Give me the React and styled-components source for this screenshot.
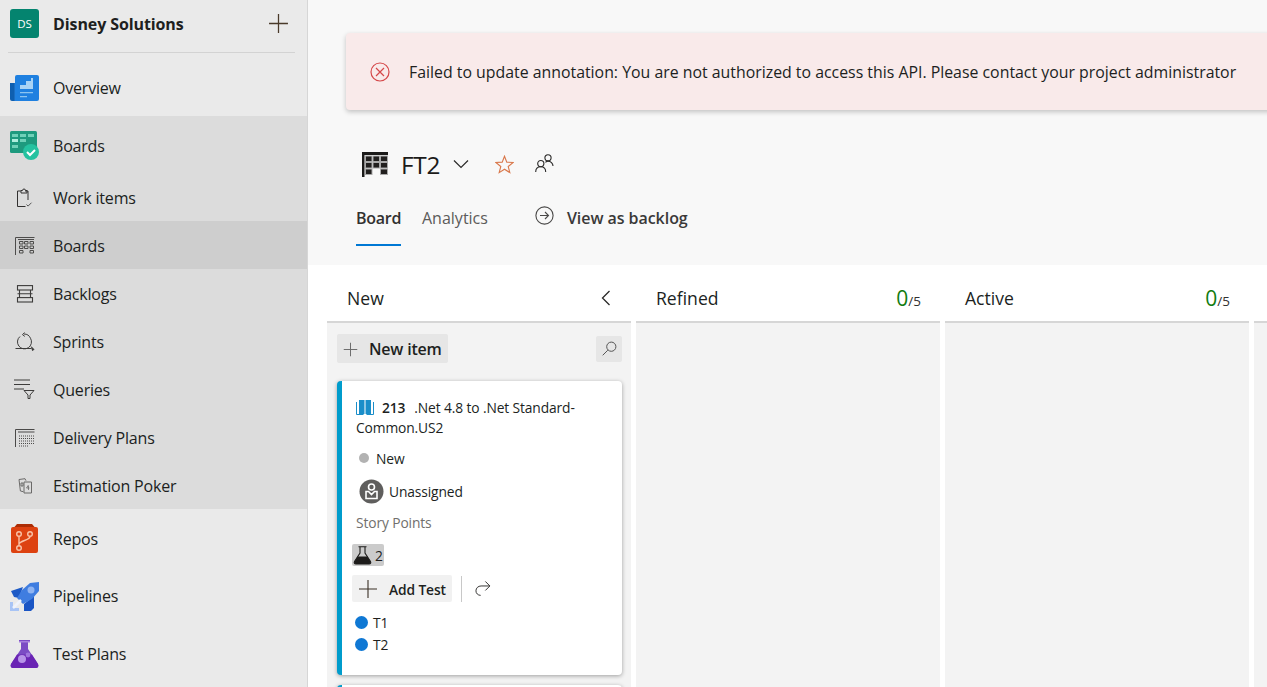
import React from 'react';
import styled, { createGlobalStyle } from 'styled-components';

const Global = createGlobalStyle`
  html, body { margin: 0; padding: 0; height: 100%; overflow: hidden; }
  body { font-family: "Open Sans", "Noto Sans", sans-serif; color: #201f1e; background: #fff; }
  * { box-sizing: border-box; }
`;

const Page = styled.div`
  display: flex;
  width: 1267px;
  height: 687px;
  overflow: hidden;
`;

/* ---- sidebar ---- */
const Sidebar = styled.nav`
  flex: 0 0 308px;
  background: #eaeaea;
  border-right: 1px solid #d6d6d6;
  display: flex;
  flex-direction: column;
`;
const ProjectHead = styled.div`
  height: 53px;
  margin: 0 12px 0 8px;
  padding: 0 2px 5px;
  display: flex;
  align-items: center;
  gap: 14px;
  border-bottom: 1px solid #d3d3d3;
`;
const Avatar = styled.div`
  width: 29px;
  height: 29px;
  border-radius: 3px;
  background: #04846f;
  color: #fff;
  font-size: 11.5px;
  display: flex;
  align-items: center;
  justify-content: center;
`;
const ProjectName = styled.div`
  flex: 1;
  font-size: 16px;
  font-weight: 700;
  letter-spacing: -0.1px;
  padding-top: 1px;
`;
const PlusWrap = styled.div`
  display: flex;
  margin-right: 4px;
`;
const Group = styled.div`
  background: #dcdcdc;
`;
const NavRow = styled.div`
  height: ${p => p.$h}px;
  display: flex;
  align-items: center;
  padding: ${p => p.$pt || 0}px 0 0 10px;
  gap: 14px;
  font-size: 16px;
  letter-spacing: -0.2px;
  background: ${p => (p.$active ? '#cecece' : 'transparent')};
  font-weight: ${p => (p.$strong ? 500 : 400)};
`;
const NavIcon = styled.span`
  width: 29px;
  display: flex;
  justify-content: center;
  flex: none;
`;

/* ---- main ---- */
const Main = styled.main`
  flex: 1;
  min-width: 0;
  display: flex;
  flex-direction: column;
`;
const Top = styled.header`
  height: 265px;
  flex: none;
  background: #f8f8f8;
  padding: 33px 0 0 38px;
`;
const Banner = styled.div`
  width: 1000px;
  height: 77px;
  background: #f9eaea;
  border-radius: 4px;
  box-shadow: 0 2px 5px rgba(0, 0, 0, 0.22);
  display: flex;
  align-items: center;
  padding: 0 0 0 24px;
  gap: 19px;
  font-size: 15.86px;
  white-space: nowrap;
`;
const TitleRow = styled.div`
  margin: 37px 0 0 16px;
  height: 34px;
  display: flex;
  align-items: center;
`;
const BoardTitle = styled.h1`
  margin: 0 0 0 12px;
  font-size: 24.4px;
  font-weight: 500;
  letter-spacing: -0.3px;
  color: #1c1b1a;
`;
const TitleIcon = styled.span`
  display: flex;
  margin: ${p => p.$mt || 0}px 0 0 ${p => p.$ml}px;
`;
const Tabs = styled.div`
  margin: 20px 0 0 10px;
  height: 45px;
  display: flex;
  align-items: flex-start;
  font-size: 16px;
  letter-spacing: -0.05px;
`;
const Tab = styled.div`
  height: 45px;
  width: ${p => p.$w}px;
  padding-top: 6px;
  margin-right: 21px;
  white-space: nowrap;
  color: ${p => (p.$active ? '#323130' : '#5c5b5a')};
  font-weight: ${p => (p.$active ? 600 : 400)};
  letter-spacing: ${p => (p.$active ? '-0.25px' : '0')};
  border-bottom: ${p => (p.$active ? '2px solid #0078d4' : '2px solid transparent')};
`;
const BacklogLink = styled.div`
  margin-left: 26px;
  padding-top: 5px;
  display: flex;
  align-items: flex-start;
  gap: 13px;
  font-weight: 600;
  color: #3a3938;
`;
const BacklogText = styled.span`
  margin-top: 1px;
`;

const Board = styled.section`
  flex: 1;
  min-height: 0;
  background: #fff;
  padding-left: 19px;
  display: flex;
  gap: 5px;
`;
const Column = styled.div`
  flex: 0 0 304px;
  display: flex;
  flex-direction: column;
`;
const ColHead = styled.div`
  height: 58px;
  flex: none;
  border-bottom: 2px solid #d6d6d6;
  padding: 9px 20px 0;
  display: flex;
  align-items: center;
  justify-content: space-between;
  font-size: 17.6px;
`;
const Count = styled.div`
  display: flex;
  align-items: baseline;
  font-size: 13.5px;
  color: #323130;
  margin-right: -1px;
`;
const CountNum = styled.span`
  font-size: 21px;
  color: #107c10;
`;
const ColBody = styled.div`
  flex: 1;
  background: #f3f3f3;
  padding: 11px 9px 0 10px;
`;
const ColTools = styled.div`
  display: flex;
  justify-content: space-between;
  align-items: center;
`;
const NewItem = styled.div`
  width: 111px;
  height: 29px;
  border-radius: 2px;
  background: #e6e6e6;
  display: flex;
  align-items: center;
  gap: 11px;
  padding: 1px 0 0 6px;
  font-size: 16px;
  font-weight: 600;
  letter-spacing: -0.2px;
`;
const SearchBtn = styled.div`
  width: 26px;
  height: 26px;
  border-radius: 2px;
  background: #e6e6e6;
  display: flex;
  align-items: center;
  justify-content: center;
`;
const Card = styled.article`
  margin-top: 18px;
  height: 294px;
  background: #fff;
  border-left: 5px solid #009ccc;
  border-radius: 4px;
  box-shadow: 0 1px 4px rgba(0, 0, 0, 0.35);
  padding: 17px 10px 0 14px;
  font-size: 13.8px;
  letter-spacing: -0.12px;
`;
const NextCard = styled(Card)`
  margin-top: 10px;
`;
const CardTitle = styled.div`
  line-height: 20px;
  height: 40px;
`;
const CardId = styled.strong`
  font-weight: 600;
  margin: 0 9px 0 8px;
`;
const TitleGlyph = styled.span`
  display: inline-block;
  vertical-align: -2px;
  line-height: 0;
`;
const StateRow = styled.div`
  margin: 11px 0 0 3px;
  height: 18px;
  display: flex;
  align-items: center;
  gap: 7px;
`;
const Dot = styled.span`
  width: ${p => p.$size}px;
  height: ${p => p.$size}px;
  border-radius: 50%;
  background: ${p => p.$color};
  flex: none;
`;
const AssignRow = styled.div`
  margin: 12px 0 0 3px;
  height: 25px;
  display: flex;
  align-items: center;
  gap: 5px;
`;
const FieldLabel = styled.div`
  margin-top: 10px;
  height: 18px;
  color: #716f6d;
  line-height: 18px;
`;
const TestChip = styled.div`
  margin: 12px 0 0 -4px;
  width: 32px;
  height: 22px;
  border-radius: 2px;
  background: #cbcbcb;
  display: flex;
  align-items: center;
  gap: 3px;
  padding-left: 1px;
`;
const ActionRow = styled.div`
  margin: 9px 0 0 -4px;
  display: flex;
  align-items: center;
`;
const AddTest = styled.div`
  width: 100px;
  height: 27px;
  border-radius: 2px;
  background: #f1f1f1;
  display: flex;
  align-items: center;
  gap: 11px;
  padding: 1px 0 0 6px;
  font-weight: 600;
`;
const Sep = styled.span`
  width: 1px;
  height: 26px;
  background: #c8c8c8;
  margin: 0 13px 0 9px;
`;
const TestList = styled.div`
  margin: 9px 0 0 -1px;
`;
const TestRow = styled.div`
  height: 22px;
  display: flex;
  align-items: center;
  gap: 5px;
`;

/* ---- icons ---- */
const Plus = ({ size = 21, color = '#4a3a2a', w = 1.2 }) => (
  <svg width={size} height={size} viewBox="0 0 20 20" fill="none" stroke={color} strokeWidth={w}>
    <path d="M10 1v18M1 10h18" />
  </svg>
);
const OverviewIcon = () => (
  <svg width="29" height="26" viewBox="0 0 29 26">
    <path d="M0 8h6v18H2a2 2 0 0 1-2-2z" fill="#0f5fb0" />
    <path d="M4 8h6v18H4z" fill="#1b6ec2" />
    <path d="M5 2a2 2 0 0 1 2-2h20a2 2 0 0 1 2 2v22a2 2 0 0 1-2 2H5z" fill="#1f80e0" />
    <path d="M10 14V10h6V6h5V3h2v11z" fill="#a9d3f5" />
    <path d="M10 17h13v1.2H10zM10 21h7v1.2h-7z" fill="#8cc4f0" />
  </svg>
);
const BoardsIcon = () => (
  <svg width="29" height="29" viewBox="0 0 29 29">
    <rect x="0" y="0" width="27" height="22" rx="1.5" fill="#1e9a7e" />
    <path d="M2 3h6v3H2zM10 3h6v3h-6zM18 3h6v3h-6zM10 8h6v3h-6zM2 14h6v3H2z" fill="#6fd1b8" />
    <path d="M2 8h6v3H2z" fill="#aeeedd" />
    <circle cx="21" cy="21" r="8" fill="#25c2a0" />
    <path d="M17 21l3 3 5-5" fill="none" stroke="#fff" strokeWidth="2" />
  </svg>
);
const ClipboardIcon = () => (
  <svg width="17" height="20" viewBox="0 0 17 20" fill="none" stroke="#323130" strokeWidth="1">
    <path d="M5 3H1.500v15.500h8M12 12V3H9" />
    <path d="M5 3.500V2.500h1.500a1.500 1.500 0 0 1 3 0H11v2.500H5z" />
    <path d="M10.500 16.500l1.600 1.600 3.400-3.400" stroke="#555" />
  </svg>
);
const GridIcon = ({ size = 20, color = '#4d4c4b' }) => (
  <svg width={size} height={size * 0.9} viewBox="0 0 20 18" fill="none" stroke={color} strokeWidth="1">
    <path d="M.5 18V.5h19" />
    <path d="M3 2.500h16" />
    <path d="M4.500 4.500h3.500v2.500h-3.500zM9.500 4.500h3.500v2.500h-3.500zM15 4.500h3.500v2.500h-3.500zM4.500 9h3.500v2.500h-3.500zM9.500 9h3.500v2.500h-3.500zM15 9h3.500v2.500h-3.500zM4.500 13.500h3.500V16h-3.500zM15 13.500h3.500V16h-3.500z" />
  </svg>
);
const BigGridIcon = () => (
  <svg width="27" height="25" viewBox="0 0 27 25">
    <path d="M0 0h26v3H2.500v22H0z" fill="#1c1b1a" />
    <g fill="#211f1e" stroke="#a9a9a9" strokeWidth="1">
      <rect x="3.500" y="4" width="6.500" height="5.500" />
      <rect x="11" y="4" width="6.500" height="5.500" />
      <rect x="18.500" y="4" width="7" height="5.500" />
      <rect x="3.500" y="10.500" width="6.500" height="5.500" />
      <rect x="11" y="10.500" width="6.500" height="5.500" />
      <rect x="18.500" y="10.500" width="7" height="5.500" />
      <rect x="3.500" y="17" width="6.500" height="5.500" />
      <rect x="18.500" y="17" width="7" height="5.500" />
    </g>
  </svg>
);
const BacklogIcon = () => (
  <svg width="18" height="18" viewBox="0 0 18 18" fill="none" stroke="#3d3c3b" strokeWidth="1.1">
    <rect x="1.500" y=".6" width="15" height="4.400" />
    <rect x="1.500" y="12.600" width="15" height="4.400" />
    <path d="M3.500 5v7.600M14.500 5v7.600M1.500 8.800h15" />
  </svg>
);
const SprintIcon = () => (
  <svg width="20" height="20" viewBox="0 0 20 20" fill="none" stroke="#3d3c3b" strokeWidth="1">
    <path d="M5 4.500a7 7 0 1 0 10.500 1.800A7 7 0 0 0 9 2" />
    <path d="M9.500 .5L7.500 2.700l2.300 1.700" />
    <path d="M.5 16.500h16" />
    <path d="M16 14.500l3 3-2 1" fill="#3d3c3b" />
  </svg>
);
const QueryIcon = () => (
  <svg width="21" height="21" viewBox="0 0 21 21" fill="none" stroke="#3d3c3b" strokeWidth="1">
    <path d="M0 1h16M0 5.500h16M0 10h10" />
    <path d="M10 11.500h10l-4 4.500v3.500h-2V16z" />
  </svg>
);
const PlanIcon = () => (
  <svg width="20" height="18" viewBox="0 0 20 18" fill="none" stroke="#4a4948" strokeWidth="1">
    <path d="M.5 18V.5h19M3 3h16.500" />
    <path d="M4 7h15M4 9.500h15M4 12h15M4 14.500h15M4 17h10" strokeDasharray="1 1" />
  </svg>
);
const PokerIcon = () => (
  <svg width="16" height="16" viewBox="0 0 16 16" fill="none" stroke="#6b6a69" strokeWidth="1">
    <path d="M2 1.500l6-.8 1 2M2 1.500l1.400 11.500 3 .7" />
    <path d="M7 4h7.500v11H7z" />
    <path d="M4 5h2v3H4z" />
    <path d="M11.500 7l-2 3h3M11.500 8v4" strokeWidth=".8" />
  </svg>
);
const ReposIcon = () => (
  <svg width="27" height="29" viewBox="0 0 27 29">
    <path d="M3 3.500L6 0h15l3 3.500z" fill="#ad2d05" />
    <path d="M0 5a2 2 0 0 1 2-2h23a2 2 0 0 1 2 2v22a2 2 0 0 1-2 2H2a2 2 0 0 1-2-2z" fill="#dd4211" />
    <g fill="none" stroke="#f9c3a8" strokeWidth="1.400">
      <circle cx="8" cy="10" r="2.300" />
      <circle cx="19" cy="10" r="2.300" />
      <circle cx="8" cy="24" r="2.300" />
      <path d="M8 12.500v9M19 12.500c0 4-11 4-11 8" />
    </g>
  </svg>
);
const PipelinesIcon = () => (
  <svg width="29" height="29" viewBox="0 0 29 29">
    <path d="M1 9l12-4-4 11-5-1z" fill="#1d5ac6" />
    <path d="M14 22l10-8v12l-3 3h-7z" fill="#1a55c4" />
    <path d="M12 8l8-7 9-1v9l-7 8-9 5-6-6z" fill="#3f7de0" />
    <circle cx="21" cy="8" r="3.500" fill="#8fb4f2" />
    <path d="M1.500 20v7.500H9" fill="none" stroke="#a8c4f5" strokeWidth="3" />
    <path d="M3 26l8-8" stroke="#eef3fc" strokeWidth="2.500" />
  </svg>
);
const FlaskIcon = () => (
  <svg width="29" height="28" viewBox="0 0 29 28">
    <path d="M9 0h11v2h-2v7l10 15c1 2 0 4-2 4H3c-2 0-3-2-2-4L11 9V2H9z" fill="#7b4cc4" />
    <path d="M7 14.500h15L28 24c1 2 0 4-2 4H3c-2 0-3-2-2-4z" fill="#6a24b4" />
    <path d="M9 1h11v1.500H9z" fill="#a67fdd" />
    <circle cx="12" cy="19" r="4" fill="#b793e8" />
    <circle cx="18" cy="15" r="2.400" fill="#9f75dd" />
  </svg>
);
const ErrorIcon = () => (
  <svg width="20" height="20" viewBox="0 0 20 20" fill="none" stroke="#d5484a" strokeWidth="1.200">
    <circle cx="10" cy="10" r="9" />
    <path d="M6 6l8 8M14 6l-8 8" />
  </svg>
);
const Chevron = () => (
  <svg width="16" height="10" viewBox="0 0 16 10" fill="none" stroke="#2b2a29" strokeWidth="1.200">
    <path d="M1 1.500l7 7 7-7" />
  </svg>
);
const Star = () => (
  <svg width="19" height="19" viewBox="0 0 19 19" fill="none" stroke="#d9774a" strokeWidth="1.100">
    <path d="M9.500 1.200l2.300 5.900 6.300.4-4.900 4 1.600 6.100-5.300-3.400-5.300 3.400 1.600-6.100-4.900-4 6.300-.4z" />
  </svg>
);
const People = () => (
  <svg width="19" height="19" viewBox="0 0 19 19" fill="none" stroke="#2b2a29" strokeWidth="1.100">
    <circle cx="13" cy="3.800" r="3.100" />
    <circle cx="5.800" cy="9.600" r="3.100" />
    <path d="M.7 18c0-3 2-5.200 5-5.200s5 2.200 5 5.200M10.400 8.400c1-.9 1.600-1.300 2.600-1.300 2.700 0 5 2.200 5 5" />
  </svg>
);
const ArrowCircle = () => (
  <svg width="19" height="19" viewBox="0 0 19 19" fill="none" stroke="#4a4948" strokeWidth="1.100">
    <circle cx="9.500" cy="9.500" r="8.600" />
    <path d="M5 9.500h8.500M10 6l3.500 3.500L10 13" />
  </svg>
);
const BackIcon = () => (
  <svg width="10" height="16" viewBox="0 0 10 16" fill="none" stroke="#2b2a29" strokeWidth="1.300">
    <path d="M8.500 1l-7 7 7 7" />
  </svg>
);
const SearchIcon = () => (
  <svg width="15" height="15" viewBox="0 0 15 15" fill="none" stroke="#555" strokeWidth="1">
    <circle cx="9.300" cy="5.700" r="4.600" />
    <path d="M5.800 9.200L.7 14.300" />
  </svg>
);
const BookIcon = () => (
  <svg width="18" height="15" viewBox="0 0 18 15">
    <path d="M3 0h5.500v14H3zM9.500 0H15v14H9.500z" fill="#1a8ec9" />
    <path d="M.5 2v12.500h7M17.500 2v12.500h-7" fill="none" stroke="#1a8ec9" />
  </svg>
);
const Assignee = () => (
  <svg width="25" height="25" viewBox="0 0 25 25">
    <circle cx="12.500" cy="12.500" r="12" fill="#5f5e5d" />
    <circle cx="12.500" cy="8" r="3" fill="none" stroke="#fff" strokeWidth="1.600" />
    <path d="M7 12.500v7h11v-7h-2.500l-3 3-3-3z" fill="none" stroke="#fff" strokeWidth="1.600" />
  </svg>
);
const SmallFlask = () => (
  <svg width="19" height="19" viewBox="0 0 19 19">
    <path d="M5.500 .8h8M7 1v6L1.500 15.500c-.7 1.400 0 2.500 1.400 2.500h13.200c1.400 0 2.100-1.100 1.400-2.500L12 7V1" fill="none" stroke="#1d1c1b" strokeWidth="1.100" />
    <path d="M4.600 10.500h9.800l3.100 5c.7 1.400 0 2.500-1.400 2.500H2.900c-1.400 0-2.100-1.100-1.400-2.500z" fill="#1d1c1b" />
  </svg>
);
const Follow = () => (
  <svg width="16" height="17" viewBox="0 0 17 17" fill="none" stroke="#2b2a29" strokeWidth="1">
    <path d="M6 15.800C3 15.800 1 13.500 1 11c0-3 2.400-5.200 5.500-5.200H15.500" />
    <path d="M11 1l4.800 4.800-4.800 4.800" />
  </svg>
);

const navTop = [
  { label: 'Work items', icon: <ClipboardIcon /> },
  { label: 'Boards', icon: <GridIcon />, active: true, strong: true },
  { label: 'Backlogs', icon: <BacklogIcon /> },
  { label: 'Sprints', icon: <SprintIcon /> },
  { label: 'Queries', icon: <QueryIcon /> },
  { label: 'Delivery Plans', icon: <PlanIcon /> },
  { label: 'Estimation Poker', icon: <PokerIcon /> },
];

export default function App() {
  return (
    <Page>
      <Global />
      <Sidebar>
        <ProjectHead>
          <Avatar>DS</Avatar>
          <ProjectName>Disney Solutions</ProjectName>
          <PlusWrap><Plus /></PlusWrap>
        </ProjectHead>
        <NavRow $h={63} $pt={7}><NavIcon><OverviewIcon /></NavIcon>Overview</NavRow>
        <Group>
          <NavRow $h={57} $strong $pt={2}><NavIcon><BoardsIcon /></NavIcon>Boards</NavRow>
          {navTop.map(n => (
            <NavRow key={n.label} $h={48} $pt={1} $active={n.active} $strong={n.strong}>
              <NavIcon>{n.icon}</NavIcon>{n.label}
            </NavRow>
          ))}
        </Group>
        <NavRow $h={59}><NavIcon><ReposIcon /></NavIcon>Repos</NavRow>
        <NavRow $h={56}><NavIcon><PipelinesIcon /></NavIcon>Pipelines</NavRow>
        <NavRow $h={60}><NavIcon><FlaskIcon /></NavIcon>Test Plans</NavRow>
      </Sidebar>
      <Main>
        <Top>
          <Banner>
            <ErrorIcon />
            Failed to update annotation: You are not authorized to access this API. Please contact your project administrator
          </Banner>
          <TitleRow>
            <BigGridIcon />
            <BoardTitle>FT2</BoardTitle>
            <TitleIcon $ml={13}><Chevron /></TitleIcon>
            <TitleIcon $ml={26}><Star /></TitleIcon>
            <TitleIcon $ml={21} $mt={-2}><People /></TitleIcon>
          </TitleRow>
          <Tabs>
            <Tab $active $w={45}>Board</Tab>
            <Tab>Analytics</Tab>
            <BacklogLink><ArrowCircle /><BacklogText>View as backlog</BacklogText></BacklogLink>
          </Tabs>
        </Top>
        <Board>
          <Column>
            <ColHead><span>New</span><BackIcon /></ColHead>
            <ColBody>
              <ColTools>
                <NewItem><Plus size={15} color="#6a6a6a" w={1.3} />New item</NewItem>
                <SearchBtn><SearchIcon /></SearchBtn>
              </ColTools>
              <Card>
                <CardTitle>
                  <TitleGlyph><BookIcon /></TitleGlyph>
                  <CardId>213</CardId>.Net 4.8 to .Net Standard-<br />Common.US2
                </CardTitle>
                <StateRow><Dot $size={10} $color="#b2b2b2" />New</StateRow>
                <AssignRow><Assignee />Unassigned</AssignRow>
                <FieldLabel>Story Points</FieldLabel>
                <TestChip><SmallFlask />2</TestChip>
                <ActionRow>
                  <AddTest><Plus size={20} color="#3a3026" w={1.1} />Add Test</AddTest>
                  <Sep />
                  <Follow />
                </ActionRow>
                <TestList>
                  <TestRow><Dot $size={13} $color="#0f78d4" />T1</TestRow>
                  <TestRow><Dot $size={13} $color="#0f78d4" />T2</TestRow>
                </TestList>
              </Card>
              <NextCard />
            </ColBody>
          </Column>
          <Column>
            <ColHead>
              <span>Refined</span>
              <Count><CountNum>0</CountNum>/5</Count>
            </ColHead>
            <ColBody />
          </Column>
          <Column>
            <ColHead>
              <span>Active</span>
              <Count><CountNum>0</CountNum>/5</Count>
            </ColHead>
            <ColBody />
          </Column>
          <Column>
            <ColHead />
            <ColBody />
          </Column>
        </Board>
      </Main>
    </Page>
  );
}
